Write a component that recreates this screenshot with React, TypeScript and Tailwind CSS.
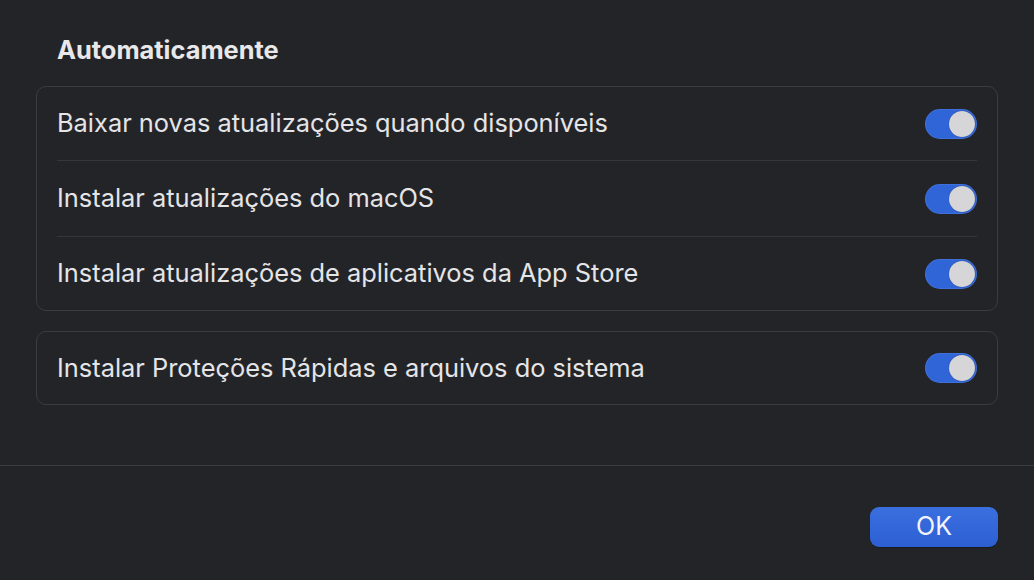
import React from "react";

const rows = [
  "Baixar novas atualizações quando disponíveis",
  "Instalar atualizações do macOS",
  "Instalar atualizações de aplicativos da App Store",
];

function Toggle() {
  return (
    <div className="flex h-[30px] w-[52px] items-center justify-end rounded-full bg-[#3065d8] p-[2px] shadow-[inset_0_0_0_1px_rgba(255,255,255,0.08)]">
      <div className="h-[26px] w-[26px] rounded-full bg-[#d6d6d9] shadow-[0_0_1px_rgba(0,0,0,0.5)]" />
    </div>
  );
}

function Row({ label, h }: { label: string; h: string }) {
  return (
    <div className={`flex items-center justify-between ${h}`}>
      <span className="text-[25.4px] text-[#e5e5e7]">{label}</span>
      <Toggle />
    </div>
  );
}

export default function App() {
  return (
    <div
      className="flex h-[580px] w-[1034px] flex-col bg-[#232428]"
      style={{ fontFamily: "Inter, 'Noto Sans', sans-serif" }}
    >
      <div className="flex-1 px-[36px] pt-[33px]">
        <h2 className="pl-[21px] text-[25.4px] font-bold leading-[34px] text-[#e8e8ea]">
          Automaticamente
        </h2>
        <div className="mt-[19px] rounded-[10px] border border-[#3b3c40] px-[20px]">
          <Row label={rows[0]} h="h-[73px]" />
          <div className="h-px bg-[#36373b]" />
          <Row label={rows[1]} h="h-[75px]" />
          <div className="h-px bg-[#36373b]" />
          <Row label={rows[2]} h="h-[73px]" />
        </div>
        <div className="mt-[20px] rounded-[10px] border border-[#3b3c40] px-[20px]">
          <Row
            label="Instalar Proteções Rápidas e arquivos do sistema"
            h="h-[72px]"
          />
        </div>
      </div>
      <div className="h-px bg-[#3a3b3f]" />
      <div className="flex h-[114px] items-start justify-end px-[36px] pt-[41px]">
        <button className="flex h-[40px] w-[128px] items-center justify-center rounded-[9px] bg-gradient-to-b from-[#3a6fe0] to-[#2d5fd3] text-[25px] text-[#f2f4fa] shadow-[0_1px_1px_rgba(0,0,0,0.3)]">
          OK
        </button>
      </div>
    </div>
  );
}
